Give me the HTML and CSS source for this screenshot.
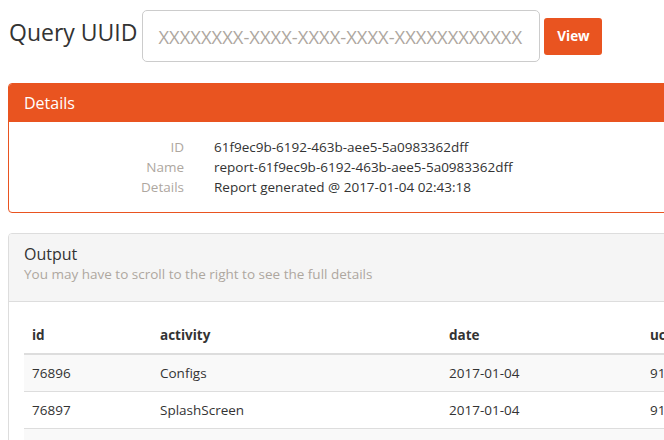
FILE: index.html
```html
<!DOCTYPE html>
<html>
<head>
<meta charset="utf-8">
<title>Query UUID</title>
<link rel="stylesheet" href="styles.css">
</head>
<body>
<div class="frame">
<div class="page">
  <div class="query">
    <h1 class="query-title">Query UUID</h1>
    <input class="query-input" type="text" placeholder="XXXXXXXX-XXXX-XXXX-XXXX-XXXXXXXXXXXX">
    <button class="btn-view" type="button">View</button>
  </div>

  <section class="panel panel-primary">
    <div class="panel-heading">Details</div>
    <div class="panel-body">
      <dl class="details">
        <dt>ID</dt><dd>61f9ec9b-6192-463b-aee5-5a0983362dff</dd>
        <dt>Name</dt><dd>report-61f9ec9b-6192-463b-aee5-5a0983362dff</dd>
        <dt>Details</dt><dd>Report generated @ 2017-01-04 02:43:18</dd>
      </dl>
    </div>
  </section>

  <section class="panel panel-default">
    <div class="panel-heading">
      <div class="panel-title">Output</div>
      <div class="panel-sub">You may have to scroll to the right to see the full details</div>
    </div>
    <div class="panel-body">
      <table class="data">
        <colgroup>
          <col class="c-id"><col class="c-activity"><col class="c-date"><col class="c-uc">
        </colgroup>
        <thead>
          <tr><th>id</th><th>activity</th><th>date</th><th>ucid</th></tr>
        </thead>
        <tbody>
          <tr><td>76896</td><td>Configs</td><td>2017-01-04</td><td>91c2e7a4</td></tr>
          <tr><td>76897</td><td>SplashScreen</td><td>2017-01-04</td><td>91c2e7a4</td></tr>
          <tr><td>76898</td><td>Home</td><td>2017-01-04</td><td>91c2e7a4</td></tr>
        </tbody>
      </table>
    </div>
  </section>
</div>
</div>
</body>
</html>
```

FILE: styles.css
```css
html {
  overflow: hidden;
}
body {
  margin: 8px 0 0 8px;
  font-family: "Open Sans", "Noto Sans", sans-serif;
  font-size: 13.5px;
  line-height: 20px;
  color: #333333;
  background: #ffffff;
}
.frame {
  overflow: hidden;
  height: 432px;
}
.page {
  width: 1000px;
}
.query {
  display: flex;
  align-items: center;
  margin-top: 2px;
}
.query-title {
  margin: 0 5px 0 1px;
  padding-bottom: 8px;
  font-size: 23px;
  font-weight: 400;
  line-height: 26px;
  color: #333333;
}
.query-input {
  box-sizing: border-box;
  width: 398px;
  height: 52px;
  padding: 0 8px 0 15px;
  border: 1px solid #cccccc;
  border-radius: 5px;
  font-family: inherit;
  font-size: 18.4px;
  color: #333333;
  outline: none;
}
.query-input::placeholder {
  color: #aea79f;
}
.btn-view {
  margin-left: 4px;
  width: 58px;
  height: 37px;
  padding: 0;
  border: none;
  border-radius: 3px;
  background: #e95420;
  color: #ffffff;
  font-family: inherit;
  font-size: 13.5px;
  font-weight: 700;
}
.panel {
  border: 1px solid #dddddd;
  border-radius: 4px;
  margin-bottom: 20px;
  background: #ffffff;
  overflow: hidden;
}
.panel-primary {
  margin-top: 21px;
  border-color: #e95420;
}
.panel-primary > .panel-heading {
  background: #e95420;
  color: #ffffff;
  font-size: 16px;
  line-height: 18px;
  padding: 10px 15px;
}
.panel-body {
  padding: 15px;
}
.details {
  display: grid;
  grid-template-columns: 160px auto;
  column-gap: 30px;
  margin: 0;
}
.details dt {
  text-align: right;
  color: #aea79f;
  font-weight: 400;
}
.details dd {
  margin: 0;
}
.panel-default > .panel-heading {
  background: #f5f5f5;
  border-bottom: 1px solid #dddddd;
  padding: 10px 15px 17px;
}
.panel-title {
  font-size: 16px;
  line-height: 20px;
}
.panel-sub {
  color: #aea79f;
  line-height: 20px;
}
.data {
  border-collapse: collapse;
  table-layout: fixed;
  width: 970px;
}
.c-id { width: 128px; }
.c-activity { width: 289px; }
.c-date { width: 201px; }
.c-uc { width: 352px; }
.data th, .data td {
  padding: 8px;
  text-align: left;
  line-height: 20px;
  vertical-align: top;
}
.data th {
  font-weight: 700;
  border-bottom: 2px solid #dddddd;
}
.data td {
  border-bottom: 1px solid #dddddd;
}
.data tbody tr:nth-child(odd) td {
  background: #f9f9f9;
}
```
